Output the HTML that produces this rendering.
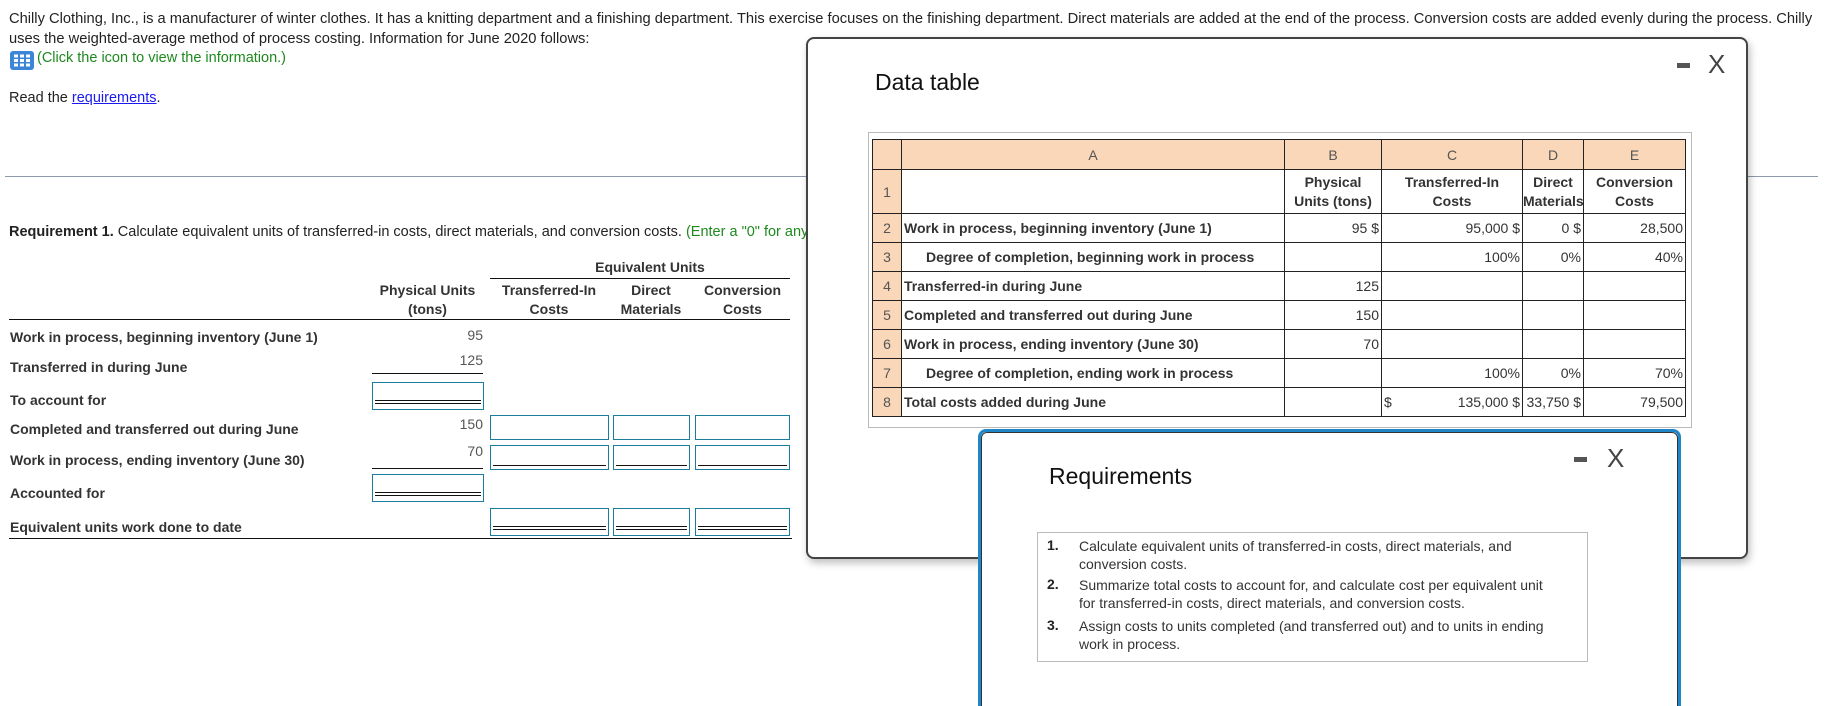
<!DOCTYPE html>
<html><head><meta charset="utf-8"><style>
html,body{margin:0;width:1837px;height:706px;overflow:hidden}
body{background:#fff;font-family:"Liberation Sans",Arial,sans-serif;color:#222;position:relative;font-size:14px}
.a{position:absolute;white-space:nowrap}
.b{font-weight:bold}
.r{text-align:right}
.c{text-align:center}
.box{position:absolute;border:1px solid #1a7d9c;background:#fff;box-sizing:border-box}
.ul{position:absolute;border-top:1.5px solid #111}
.dbl{position:absolute;border-top:1px solid #111;border-bottom:1px solid #111;height:2px}
table.dt{position:absolute;left:872px;top:139px;border-collapse:collapse;font-size:14px;color:#333;table-layout:fixed;width:813px}
table.dt td{border:1.5px solid #222;padding:0 2px;height:29px;white-space:nowrap;overflow:hidden;box-sizing:border-box}
table.dt td.n{background:#fad7b8;text-align:center;color:#555}
table.dt tr.h td{background:#fad7b8;text-align:center;color:#555;height:30px}
</style></head><body>
<div class="a" style="left:9px;top:9px;font-size:14.7px;line-height:20px;white-space:normal;width:1822px">Chilly Clothing, Inc., is a manufacturer of winter clothes. It has a knitting department and a finishing department. This exercise focuses on the finishing department. Direct materials are added at the end of the process. Conversion costs are added evenly during the process. Chilly uses the weighted-average method of process costing. Information for June 2020 follows:</div>
<svg class="a" style="left:10px;top:51px" width="24" height="19" viewBox="0 0 24 19"><rect x="0" y="0" width="24" height="19" rx="3" fill="#3b86d6"/><g fill="#fff"><rect x="4" y="3.5" width="4" height="3"/><rect x="10" y="3.5" width="4" height="3"/><rect x="16" y="3.5" width="4" height="3"/><rect x="4" y="8" width="4" height="3"/><rect x="10" y="8" width="4" height="3"/><rect x="16" y="8" width="4" height="3"/><rect x="4" y="12.5" width="4" height="3"/><rect x="10" y="12.5" width="4" height="3"/><rect x="16" y="12.5" width="4" height="3"/></g></svg>
<div class="a" style="left:37px;top:50px;color:#1e8a1e;font-size:14.5px">(Click the icon to view the information.)</div>
<div class="a" style="left:9px;top:90px;font-size:14.5px">Read the <span style="color:#1a1aee;text-decoration:underline">requirements</span>.</div>
<div class="a" style="left:5px;top:176px;width:1813px;border-top:1px solid #8d9aab"></div>
<div class="a" style="left:9px;top:224px;font-size:14.5px"><b>Requirement 1.</b> Calculate equivalent units of transferred-in costs, direct materials, and conversion costs. <span style="color:#1e8a1e">(Enter a "0" for any zero balances.)</span></div>

<div class="a b c" style="left:560px;top:259px;width:180px;color:#333">Equivalent Units</div>
<div class="ul" style="left:490px;top:278px;width:300px"></div>
<div class="a b c" style="left:370px;top:281px;width:115px;line-height:19px;color:#333">Physical Units<br>(tons)</div>
<div class="a b c" style="left:490px;top:281px;width:118px;line-height:19px;color:#333">Transferred-In<br>Costs</div>
<div class="a b c" style="left:613px;top:281px;width:76px;line-height:19px;color:#333">Direct<br>Materials</div>
<div class="a b c" style="left:695px;top:281px;width:95px;line-height:19px;color:#333">Conversion<br>Costs</div>
<div class="ul" style="left:9px;top:319px;width:781px"></div>

<div class="a b" style="left:10px;top:329px;color:#333">Work in process, beginning inventory (June 1)</div>
<div class="a r" style="left:400px;top:327px;width:83px;color:#555">95</div>
<div class="a b" style="left:10px;top:359px;color:#333">Transferred in during June</div>
<div class="a r" style="left:400px;top:352px;width:83px;color:#555">125</div>
<div class="ul" style="left:372px;top:373px;width:111px"></div>
<div class="a b" style="left:10px;top:392px;color:#333">To account for</div>
<div class="box" style="left:372px;top:382px;width:112px;height:28px"></div>
<div class="dbl" style="left:375px;top:400px;width:106px"></div>
<div class="a b" style="left:10px;top:421px;color:#333">Completed and transferred out during June</div>
<div class="a r" style="left:400px;top:416px;width:83px;color:#555">150</div>
<div class="box" style="left:490px;top:415px;width:119px;height:25px"></div>
<div class="box" style="left:613px;top:415px;width:77px;height:25px"></div>
<div class="box" style="left:695px;top:415px;width:95px;height:25px"></div>
<div class="a b" style="left:10px;top:452px;color:#333">Work in process, ending inventory (June 30)</div>
<div class="a r" style="left:400px;top:443px;width:83px;color:#555">70</div>
<div class="ul" style="left:372px;top:468px;width:111px"></div>
<div class="box" style="left:490px;top:445px;width:119px;height:25px"></div>
<div class="box" style="left:613px;top:445px;width:77px;height:25px"></div>
<div class="box" style="left:695px;top:445px;width:95px;height:25px"></div>
<div class="ul" style="left:493px;top:465px;width:113px"></div>
<div class="ul" style="left:616px;top:465px;width:71px"></div>
<div class="ul" style="left:698px;top:465px;width:89px"></div>
<div class="a b" style="left:10px;top:485px;color:#333">Accounted for</div>
<div class="box" style="left:372px;top:474px;width:112px;height:28px"></div>
<div class="dbl" style="left:375px;top:492px;width:106px"></div>
<div class="a b" style="left:10px;top:519px;color:#333">Equivalent units work done to date</div>
<div class="box" style="left:490px;top:508px;width:119px;height:28px"></div>
<div class="box" style="left:613px;top:508px;width:77px;height:28px"></div>
<div class="box" style="left:695px;top:508px;width:95px;height:28px"></div>
<div class="dbl" style="left:493px;top:526px;width:113px"></div>
<div class="dbl" style="left:616px;top:526px;width:71px"></div>
<div class="dbl" style="left:698px;top:526px;width:89px"></div>
<div class="ul" style="left:9px;top:538px;width:783px"></div>

<!-- data table modal -->
<div class="a" style="left:806px;top:37px;width:942px;height:522px;box-sizing:border-box;border:2px solid #444;border-radius:8px;background:#fff;box-shadow:2px 4px 8px rgba(0,0,0,.25)"></div>
<div class="a" style="left:875px;top:69px;font-size:23px;color:#111">Data table</div>
<div class="a" style="left:1677px;top:63px;width:13px;height:5px;background:#555"></div>
<div class="a" style="left:1708px;top:49px;font-size:26px;color:#444">X</div>
<div class="a" style="left:868px;top:132px;width:824px;height:296px;box-sizing:border-box;border:1px solid #bbb"></div>
<table class="dt">
<colgroup><col style="width:29px"><col style="width:383px"><col style="width:97px"><col style="width:141px"><col style="width:61px"><col style="width:102px"></colgroup>
<tr class="h"><td></td><td>A</td><td>B</td><td>C</td><td>D</td><td>E</td></tr>
<tr><td class="n" style="height:44px">1</td><td></td><td class="c b" style="line-height:19px;color:#333">Physical<br>Units (tons)</td><td class="c b" style="line-height:19px;color:#333">Transferred-In<br>Costs</td><td class="c b" style="line-height:19px;color:#333;padding:0">Direct<br>Materials</td><td class="c b" style="line-height:19px;color:#333">Conversion<br>Costs</td></tr>
<tr><td class="n">2</td><td class="b">Work in process, beginning inventory (June 1)</td><td class="r">95 $</td><td class="r">95,000 $</td><td class="r">0 $</td><td class="r">28,500</td></tr>
<tr><td class="n">3</td><td class="b" style="padding-left:24px">Degree of completion, beginning work in process</td><td></td><td class="r">100%</td><td class="r">0%</td><td class="r">40%</td></tr>
<tr><td class="n">4</td><td class="b">Transferred-in during June</td><td class="r">125</td><td></td><td></td><td></td></tr>
<tr><td class="n">5</td><td class="b">Completed and transferred out during June</td><td class="r">150</td><td></td><td></td><td></td></tr>
<tr><td class="n">6</td><td class="b">Work in process, ending inventory (June 30)</td><td class="r">70</td><td></td><td></td><td></td></tr>
<tr><td class="n">7</td><td class="b" style="padding-left:24px">Degree of completion, ending work in process</td><td></td><td class="r">100%</td><td class="r">0%</td><td class="r">70%</td></tr>
<tr><td class="n">8</td><td class="b">Total costs added during June</td><td></td><td><span style="float:left">$</span><span style="float:right">135,000 $</span></td><td class="r">33,750 $</td><td class="r">79,500</td></tr>
</table>

<!-- requirements modal -->
<div class="a" style="left:978px;top:429px;width:703px;height:277px;box-sizing:border-box;border:3px solid #1f86c8;border-bottom:none;border-radius:8px 8px 0 0;background:#fff"></div>
<div class="a" style="left:981px;top:432px;width:697px;height:274px;box-sizing:border-box;border:1px solid #333;border-bottom:none;border-radius:6px 6px 0 0"></div>
<div class="a" style="left:1049px;top:463px;font-size:23px;color:#111">Requirements</div>
<div class="a" style="left:1574px;top:457px;width:13px;height:5px;background:#555"></div>
<div class="a" style="left:1607px;top:443px;font-size:26px;color:#444">X</div>
<div class="a" style="left:1037px;top:532px;width:551px;height:130px;box-sizing:border-box;border:1px solid #bbb"></div>
<div class="a b" style="left:1047px;top:537px">1.</div>
<div class="a" style="left:1079px;top:537px;line-height:18px;color:#333">Calculate equivalent units of transferred-in costs, direct materials, and<br>conversion costs.</div>
<div class="a b" style="left:1047px;top:576px">2.</div>
<div class="a" style="left:1079px;top:576px;line-height:18px;color:#333">Summarize total costs to account for, and calculate cost per equivalent unit<br>for transferred-in costs, direct materials, and conversion costs.</div>
<div class="a b" style="left:1047px;top:617px">3.</div>
<div class="a" style="left:1079px;top:617px;line-height:18px;color:#333">Assign costs to units completed (and transferred out) and to units in ending<br>work in process.</div>
</body></html>
